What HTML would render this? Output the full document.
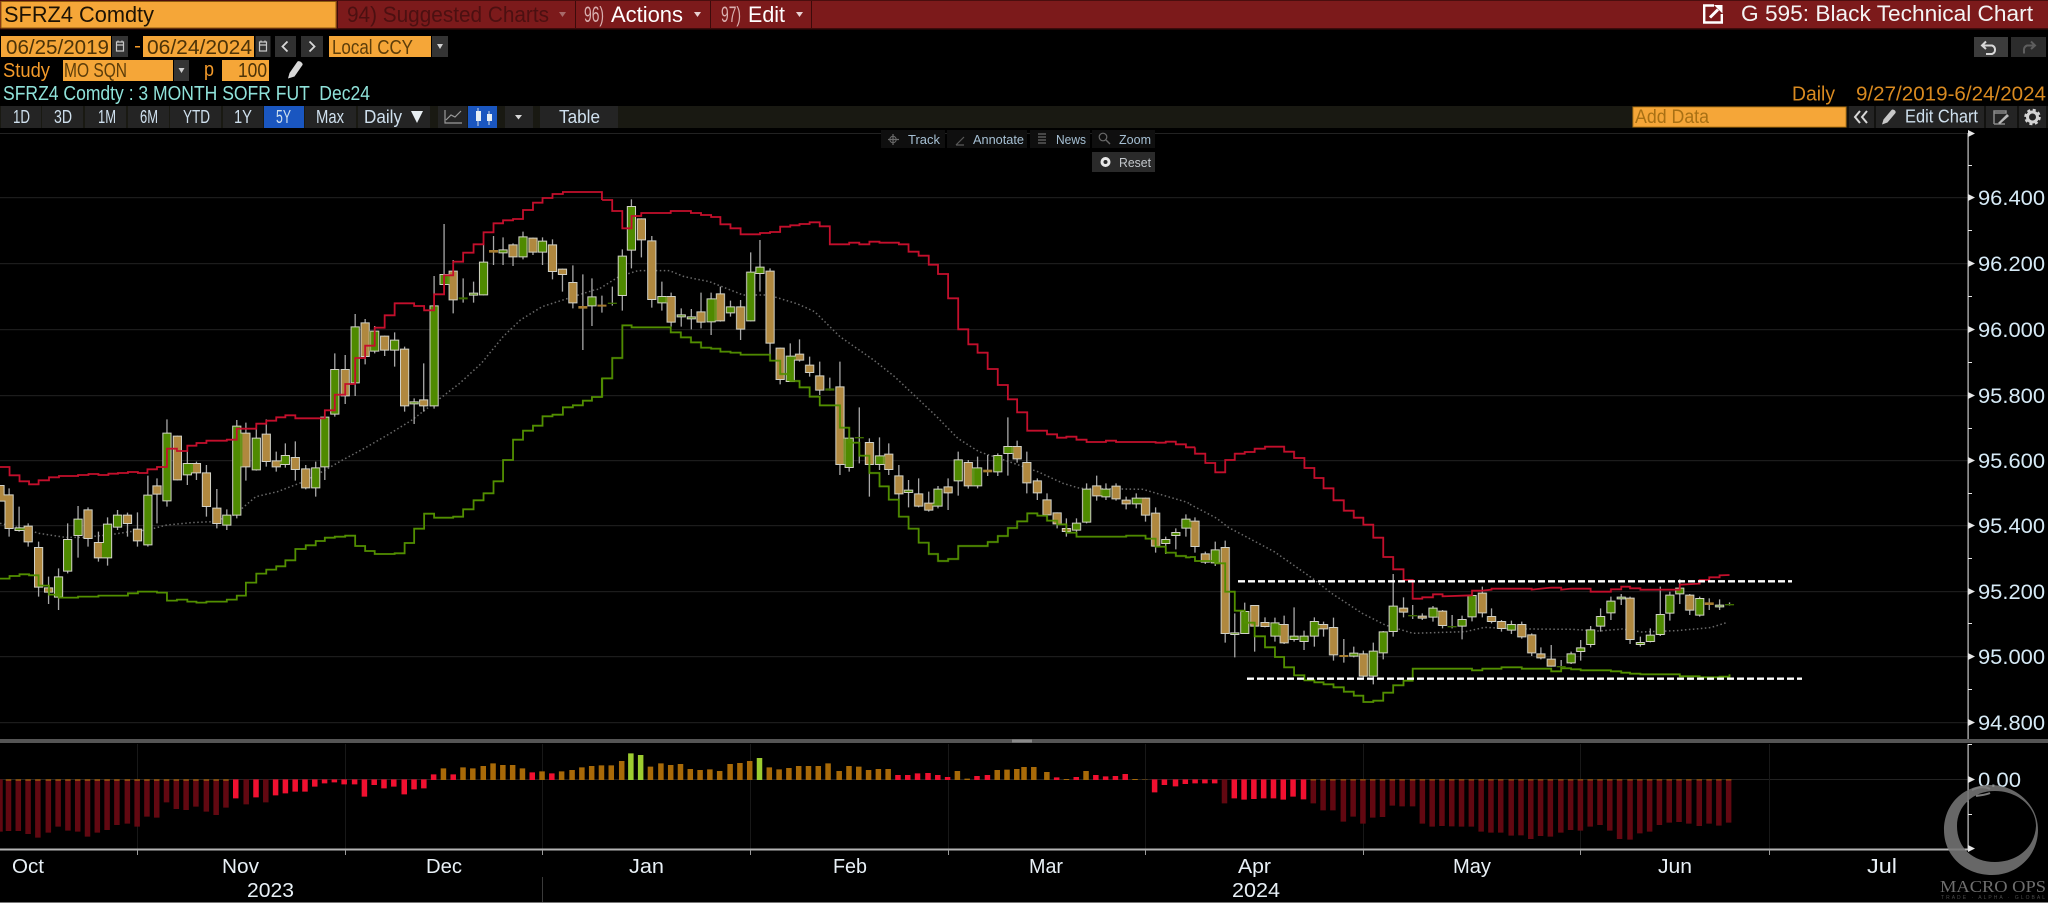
<!DOCTYPE html>
<html><head><meta charset="utf-8"><title>G 595: Black Technical Chart</title>
<style>
html,body{margin:0;padding:0;background:#000;width:2048px;height:903px;overflow:hidden}
svg{display:block;font-family:"Liberation Sans",sans-serif}
path,polyline,line{vector-effect:non-scaling-stroke}
.w{stroke:#a8a8a8;stroke-width:1.3;fill:none}
.b{stroke:#b0883f;stroke-width:9.2;fill:none}
.g{stroke:#4f8a00;stroke-width:9.2;fill:none}
.db{stroke:#a67c30;stroke-width:9;fill:none}
.dg{stroke:#3d6c00;stroke-width:9;fill:none}
.r{fill:none;stroke:#c40f2c;stroke-width:1.8;stroke-linejoin:miter}
.l{fill:none;stroke:#528f00;stroke-width:1.8;stroke-linejoin:miter}
.m{fill:none;stroke:#6a6a6a;stroke-width:1.5;stroke-dasharray:1.5 2.5}
.hd{stroke:#620811;stroke-width:5.5;fill:none}
.hr{stroke:#f01030;stroke-width:5.5;fill:none}
.ho{stroke:#a86a08;stroke-width:5.5;fill:none}
.hl{stroke:#9ccc30;stroke-width:5.5;fill:none}
.t{font-size:20px}
.tp{font-size:22px}
.tb{font-size:18px;fill:#cfe0ee}
.ax{font-size:21px;fill:#d6eaf6}
.dt{font-size:20px;fill:#e8f0f6}
.ov{font-size:13px;fill:#a6c0d4}
</style></head><body>
<svg xmlns="http://www.w3.org/2000/svg" width="2048" height="903" viewBox="0 0 2048 903">
<defs>
<filter id="o" filterUnits="userSpaceOnUse" x="0" y="130" width="2048" height="620" color-interpolation-filters="sRGB">
<feFlood flood-color="#d2d2c8" result="f"/>
<feComposite in="f" in2="SourceAlpha" operator="in" result="edge"/>
<feMorphology in="SourceGraphic" operator="erode" radius="1" result="inner"/>
<feMerge><feMergeNode in="edge"/><feMergeNode in="inner"/></feMerge>
</filter>
</defs>
<rect width="2048" height="903" fill="#000"/>

<!-- top bar -->
<rect x="0" y="0" width="2048" height="29" fill="#7c1a1b"/>
<rect x="0" y="0" width="2048" height="1" fill="#4a0e0e"/>
<rect x="0" y="28" width="2048" height="1.5" fill="#3c0b0b"/>
<rect x="1" y="1.5" width="335" height="26.5" fill="#f5a638" stroke="#8a5a10" stroke-width="1"/>
<g fill="#3c0b0b"><rect x="337" y="1" width="1" height="28"/><rect x="575" y="1" width="1" height="28"/><rect x="710" y="1" width="1" height="28"/><rect x="811" y="1" width="1" height="28"/></g>
<text x="4" y="22" class="tp" fill="#1c1204" textLength="150" lengthAdjust="spacingAndGlyphs">SFRZ4 Comdty</text>
<text x="347" y="22" class="tp" fill="#4c1011" textLength="202" lengthAdjust="spacingAndGlyphs">94) Suggested Charts</text>
<path d="M559 12h7l-3.500 5z" fill="#a86a6a"/>
<text x="584" y="22" class="tp" fill="#d9b0b0" textLength="20" lengthAdjust="spacingAndGlyphs">96)</text>
<text x="611" y="22" class="tp" fill="#fff" textLength="72" lengthAdjust="spacingAndGlyphs">Actions</text>
<path d="M694 12h7l-3.500 5z" fill="#e8d0d0"/>
<text x="721" y="22" class="tp" fill="#d9b0b0" textLength="20" lengthAdjust="spacingAndGlyphs">97)</text>
<text x="748" y="22" class="tp" fill="#fff" textLength="37" lengthAdjust="spacingAndGlyphs">Edit</text>
<path d="M796 12h7l-3.500 5z" fill="#e8d0d0"/>
<path d="M1714 5.500H1704.200V22.500H1721.800V14" fill="none" stroke="#fff" stroke-width="2.400"/>
<path d="M1710 17.500L1718 9.500" fill="none" stroke="#fff" stroke-width="3"/><path d="M1714 5h8.500v8.500z" fill="#fff"/>
<text x="1741" y="21" class="tp" fill="#f4f4f4" textLength="292" lengthAdjust="spacingAndGlyphs">G 595: Black Technical Chart</text>

<!-- row 2 -->
<rect x="1" y="36" width="110" height="21" fill="#f5a638"/>
<text x="6" y="54" class="t" fill="#4c3308" textLength="103" lengthAdjust="spacingAndGlyphs">06/25/2019</text>
<rect x="112" y="36" width="16" height="21" fill="#343434"/>
<path d="M116.500 42h7v9h-7zM116.500 45h7M118 40.500v2M122 40.500v2" fill="none" stroke="#c8c8c8" stroke-width="1.200"/>
<rect x="135" y="46" width="5" height="1.500" fill="#f39a2a"/>
<rect x="143" y="36" width="111" height="21" fill="#f5a638"/>
<text x="147" y="54" class="t" fill="#4c3308" textLength="105" lengthAdjust="spacingAndGlyphs">06/24/2024</text>
<rect x="255.500" y="36" width="15" height="21" fill="#343434"/>
<path d="M259.500 42h7v9h-7zM259.500 45h7M261 40.500v2M265 40.500v2" fill="none" stroke="#c8c8c8" stroke-width="1.200"/>
<rect x="275" y="36" width="21" height="21" fill="#303030"/><rect x="301" y="36" width="22" height="21" fill="#303030"/>
<path d="M287.500 41.500L282.500 46.500L287.500 51.500M309.500 41.500L314.500 46.500L309.500 51.500" fill="none" stroke="#d8d8d8" stroke-width="1.800"/>
<rect x="329" y="36" width="102" height="21" fill="#f5a638"/>
<text x="332" y="54" class="t" fill="#5c3d0a" textLength="81" lengthAdjust="spacingAndGlyphs">Local CCY</text>
<rect x="432" y="36" width="16" height="21" fill="#343434"/><path d="M437 44h6l-3 5z" fill="#d0d0d0"/>
<rect x="1974" y="37" width="34" height="20" fill="#3c3c3c"/><rect x="2011" y="37" width="35" height="20" fill="#2c2c2c"/>
<path d="M1986 41.500L1982 45.500L1986 49M1982.500 45.500H1992a4.500 4.500 0 0 1 0 8.500H1986" fill="none" stroke="#d8d8d8" stroke-width="2"/>
<path d="M2031 41.500L2035 45.500L2031 49M2034.500 45.500H2027a4.500 4.500 0 0 0 -3 5v3" fill="none" stroke="#5e5e5e" stroke-width="2"/>

<!-- row 3 -->
<text x="3" y="77" class="t" fill="#f39a2a" textLength="47" lengthAdjust="spacingAndGlyphs">Study</text>
<rect x="63" y="60" width="110" height="21" fill="#f5a638"/>
<text x="64" y="77" class="t" fill="#5c3d0a" textLength="63" lengthAdjust="spacingAndGlyphs">MO SQN</text>
<rect x="174" y="60" width="15" height="21" fill="#343434"/><path d="M178.500 68h6l-3 5z" fill="#d0d0d0"/>
<text x="204" y="76" class="t" fill="#f39a2a" textLength="10" lengthAdjust="spacingAndGlyphs">p</text>
<rect x="222" y="60" width="47" height="21" fill="#f5a638"/>
<text x="238" y="77" class="t" fill="#4c3308" textLength="29" lengthAdjust="spacingAndGlyphs">100</text>
<path d="M288 78.500l1.500-5.500 8-11.500c1.500-1.500 6 1.500 5 3.500l-8 11.500z" fill="#d8d8d8"/>

<!-- row 4 -->
<text x="3" y="100" class="t" fill="#8fe2da" textLength="367" lengthAdjust="spacingAndGlyphs" xml:space="preserve">SFRZ4 Comdty : 3 MONTH SOFR FUT  Dec24</text>
<text x="1792" y="100.500" class="t" fill="#d98a20" textLength="43" lengthAdjust="spacingAndGlyphs">Daily</text>
<text x="1856" y="100.500" class="t" fill="#d98a20" textLength="190" lengthAdjust="spacingAndGlyphs">9/27/2019-6/24/2024</text>

<!-- toolbar -->
<rect x="0" y="106" width="1633" height="22" fill="#191912"/>
<rect x="1846" y="106" width="202" height="22" fill="#121210"/>
<g fill="#242424">
<rect x="1" y="106" width="40" height="22"/><rect x="42" y="106" width="41" height="22"/><rect x="85" y="106" width="41" height="22"/><rect x="128" y="106" width="41" height="22"/><rect x="170" y="106" width="51" height="22"/><rect x="223" y="106" width="40" height="22"/><rect x="305" y="106" width="51" height="22"/><rect x="358" y="106" width="72" height="22"/><rect x="438" y="106" width="29" height="22"/><rect x="505" y="106" width="28" height="22"/><rect x="540" y="106" width="78" height="22"/>
<rect x="1849" y="106" width="25" height="22"/><rect x="1876" y="106" width="108" height="22"/><rect x="1986" y="106" width="31" height="22"/><rect x="2019" y="106" width="27" height="22"/>
</g>
<rect x="264" y="106" width="40" height="22" fill="#1a56c0"/>
<rect x="468" y="106" width="29" height="22" fill="#1a56c0"/>
<g class="tb">
<text x="13" y="123" textLength="17" lengthAdjust="spacingAndGlyphs">1D</text>
<text x="54" y="123" textLength="18" lengthAdjust="spacingAndGlyphs">3D</text>
<text x="98" y="123" textLength="18" lengthAdjust="spacingAndGlyphs">1M</text>
<text x="140" y="123" textLength="18" lengthAdjust="spacingAndGlyphs">6M</text>
<text x="183" y="123" textLength="27" lengthAdjust="spacingAndGlyphs">YTD</text>
<text x="234" y="123" textLength="18" lengthAdjust="spacingAndGlyphs">1Y</text>
<text x="276" y="123" textLength="15" lengthAdjust="spacingAndGlyphs">5Y</text>
<text x="316" y="123" textLength="28" lengthAdjust="spacingAndGlyphs">Max</text>
<text x="364" y="123" textLength="38" lengthAdjust="spacingAndGlyphs">Daily</text>
<text x="559" y="123" textLength="41" lengthAdjust="spacingAndGlyphs">Table</text>
<text x="1905" y="122.500" textLength="73" lengthAdjust="spacingAndGlyphs">Edit Chart</text>
</g>
<path d="M411 111h12l-6 12z" fill="#e8eef2"/>
<path d="M445 110v13h17M446 120l5-5 4 2 6-6" fill="none" stroke="#9a9a9a" stroke-width="1.200"/>
<path d="M478 108v18M489 111v14" stroke="#d0d8e0" stroke-width="1"/><path d="M476 111h5v10h-5zM487 114h5v7h-5z" fill="#e6eef4"/>
<path d="M515 115h7l-3.500 4.500z" fill="#d8d8d8"/>
<rect x="1633" y="107" width="213" height="20" fill="#f5a638" stroke="#b87a18" stroke-width="1"/>
<text x="1635" y="123" font-size="19" fill="#a87014" textLength="74" lengthAdjust="spacingAndGlyphs">Add Data</text>
<path d="M1860 111l-5 6 5 6M1867 111l-5 6 5 6" fill="none" stroke="#d8d8d8" stroke-width="2"/>
<path d="M1882 124.500l1.500-5 8-9.500c1.500-1.500 5 1 4 3l-8 9.500z" fill="#c8c8c8"/>
<path d="M1994 111h12v2h-12zM1994 113v11M1994 124h11" fill="none" stroke="#8a8a8a" stroke-width="1.500"/><path d="M1998 123l9-9 2 2-9 8z" fill="#b8b8b8"/>
<circle cx="2032.500" cy="117" r="5" fill="none" stroke="#d4d4d4" stroke-width="3"/><circle cx="2032.500" cy="117" r="7" fill="none" stroke="#d4d4d4" stroke-width="2.500" stroke-dasharray="3 2.500"/>

<!-- chart frame -->
<rect x="0" y="133" width="1968" height="1" fill="#222"/>
<g fill="#1c1c1c">
<rect x="0" y="197" width="1968" height="1.200"/><rect x="0" y="263" width="1968" height="1.200"/><rect x="0" y="329" width="1968" height="1.200"/><rect x="0" y="395" width="1968" height="1.200"/><rect x="0" y="460" width="1968" height="1.200"/><rect x="0" y="525" width="1968" height="1.200"/><rect x="0" y="591" width="1968" height="1.200"/><rect x="0" y="656" width="1968" height="1.200"/><rect x="0" y="722" width="1968" height="1.200"/>
</g>

<!-- moving average -->
<g transform="translate(0,140) scale(.43367,.33333)"><polyline class="m" points="0,1150 50,1165 90,1180 150,1192 190,1192 250,1185 300,1175 340,1170 385,1155 440,1148 490,1145 540,1125 590,1070 640,1055 700,1025 750,990 790,960 840,925 900,880 950,840 1000,790 1060,730 1110,670 1160,590 1200,540 1250,500 1310,475 1370,450 1383,447"/></g>
<g transform="translate(600,180) scale(.42092,.33333)"><polyline class="m" points="0,325 45,290 90,272 165,272 200,290 260,305 300,325 340,345 400,345 470,372 510,395 570,470 650,540 700,590 750,650 800,710 850,775 900,815 960,840 1040,875 1100,910 1140,925 1290,928 1390,965 1400,970"/></g>
<g transform="translate(1190,440) scale(.38265,.33333)"><polyline class="m" points="0,193 70,235 100,262 220,335 320,415 370,460 450,520 510,555 583,580 720,575 770,562 820,565 880,567 1000,568 1070,573 1130,567 1180,576 1270,572 1360,563 1405,547"/></g>

<!-- wicks -->
<g transform="translate(0,140) scale(.43367,.33333)"><path class="w" d="M21 1045V1190M44 1100V1175M65 1150V1220M89 1205V1370M112 1310V1392M135 1285V1410M156 1150V1300M180 1098V1253M203 1102V1220M227 1175V1265M248 1132V1277M271 1110V1170M294 1118V1190M317 1117V1220M341 1007V1220M362 1015V1150M385 838V1100M409 887V1021M432 930V1035M453 965V1020M476 975V1130M500 1047V1165M523 1108V1170M546 840V1135M567 848V1022M591 865V992M614 838V980M637 935V995M658 910V983M681 904V1022M705 975V1048M728 965V1070M749 830V1020M772 640V830M796 645V792M819 522V768M842 537V673M864 558V640M887 587V648M910 577V680M933 620V815M955 775V852M977 670V815M1001 408V806M1024 252V435M1045 360V520M1068 415V488M1092 425V488M1115 312V466M1138 288V375M1160 292V375M1183 310V378M1206 275V358M1229 293V345M1251 292V375M1274 298V418M1297 386V455M1321 376V505M1344 403V630M1365 415V558M1388 467V518M1412 440V497M1435 328V512M1456 178V385M1479 235V352M1503 288V503"/></g>
<g transform="translate(600,180) scale(.42092,.33333)"><path class="w" d="M147 305V392M169 338V440M193 385V440M217 387V448M240 338V445M264 338V465M286 320V425M310 362V410M334 360V480M358 217V424M380 180V335M404 265V525M428 503V613M452 490V606M474 478V545M498 530V590M522 545V645M546 593V632M570 545V885M592 773V875M616 682V850M640 775V950M664 772V870M686 790V885M710 855V960M733 900V982M757 895V982M781 935V995M803 918V985M827 895V990M851 815V947M875 840V926M897 830V925M921 825V888M945 820V888M969 712V887M991 782V848M1014 815V940M1039 895V960M1062 940V1012M1086 997V1045M1108 1015V1070M1132 1015V1060M1156 910V1030M1180 887V962M1202 910V960M1226 910V962M1250 950V988M1274 940V985M1296 953V1025M1320 982V1118M1344 1070V1122M1368 1045V1108M1392 1003V1070"/></g>
<g transform="translate(1190,440) scale(.38265,.33333)"><path class="w" d="M13 232V338M40 335V372M66 305V378M92 302V608M117 520V652M143 488V582M169 495V635M196 532V562M222 533V605M246 527V612M272 502V605M298 572V630M325 532V620M349 545V590M375 533V662M402 597V668M428 620V652M453 632V712M479 608V733M505 573V658M531 402V590M558 472V532M582 495V537M607 520V540M635 498V545M660 510V565M685 525V565M711 527V598M737 465V544M764 440V532M788 505V550M814 540V575M840 542V582M867 545V596M893 580V648M917 622V658M944 615V680M970 660V695M996 635V672M1021 600V662M1047 558V622M1073 505V575M1100 470V540M1127 462V495M1150 470V612M1177 590V620M1203 565V607M1229 440V588M1254 455V542M1280 418V492M1306 462V525M1332 470V530M1357 475V510M1384 478V510M1410 487V497"/></g>

<!-- dojis -->
<g transform="translate(0,140) scale(.43367,.33333)"><path class="db" d="M1138 330V338M1344 498V506M1388 494V500"/><path class="dg" d="M1068 472V478M1412 488V492"/></g>
<g transform="translate(600,180) scale(.42092,.33333)"><path class="dg" d="M546 625V632M616 771V775"/><path class="db" d="M921 869V877"/></g>
<g transform="translate(1190,440) scale(.38265,.33333)"><path class="db" d="M402 645V651M1357 487V495"/><path class="dg" d="M582 525V529M685 558V562M970 678V682M1410 492V496"/></g>

<!-- candle bodies -->
<g filter="url(#o)">
<g transform="translate(0,140) scale(.43367,.33333)">
<path class="b" d="M0 1035V1085M21 1063V1167M65 1157V1207M89 1221V1343M112 1342V1358M203 1108V1197M227 1206V1255M294 1124V1152M317 1166V1204M362 1036V1064M409 887V1021M453 969V1000M476 997V1101M500 1103V1152M567 878V982M614 881V966M637 961V982M681 951V990M705 985V1045M796 687V769M842 547V651M887 587V632M933 626V799M977 778V799M1045 392V481M1183 313V352M1229 293V338M1274 313V396M1297 386V405M1321 426V490M1479 235V301M1503 301V480"/>
<path class="g" d="M44 1162V1173M135 1309V1373M156 1197V1295M180 1136V1188M248 1151V1255M271 1124V1163M341 1064V1216M385 878V1084M432 969V1006M523 1124V1157M546 857V1127M591 893V991M658 945V975M728 982V1045M749 830V982M772 687V824M819 559V730M864 572V635M910 599V632M955 784V793M1001 496V799M1024 402V435M1092 458V467M1115 365V466M1160 328V340M1206 289V352M1251 302V338M1365 469V499M1435 347V468M1456 198V332"/>
</g>
<g transform="translate(600,180) scale(.42092,.33333)">
<path class="b" d="M169 348V428M240 394V428M286 340V424M334 379V449M404 272V491M428 503V600M474 521V542M498 554V579M522 586V632M570 619V855M640 786V855M686 821V870M710 886V943M757 940V980M781 968V992M827 919V940M875 846V919M991 798V838M1014 846V910M1039 901V940M1062 958V1006M1086 997V1033M1108 1044V1056M1180 916V949M1226 917V958M1250 959V973M1296 953V1007M1320 998V1100"/>
<path class="g" d="M147 348V370M193 403V412M217 409V418M264 355V427M310 379V400M358 275V424M380 260V282M452 527V606M592 773V864M664 826V855M733 929V939M803 926V980M851 838V904M897 862V919M945 825V877M969 798V822M1132 1028V1052M1156 926V1028M1202 926V952M1274 953V973M1344 1077V1092M1368 1056V1068M1392 1016V1046"/>
</g>
<g transform="translate(1190,440) scale(.38265,.33333)">
<path class="b" d="M13 242V321M40 340V368M92 321V582M169 495V560M196 546V561M246 552V610M349 552V568M375 561V646M453 640V710M558 503V518M607 527V536M660 512V558M764 458V520M788 528V546M814 543V567M867 552V592M893 583V640M917 640V655M944 656V680M1150 473V600M1306 464V512"/>
<path class="g" d="M66 328V370M117 577V585M143 513V582M222 547V590M272 587V600M298 587V606M325 543V590M428 638V650M479 632V710M505 574V640M531 497V576M635 503V533M711 537V560M737 465V532M840 552V572M996 640V670M1021 622V636M1047 568V615M1073 528V560M1100 482V520M1127 470V478M1177 606V615M1203 584V606M1229 522V585M1254 464V521M1280 443V463M1332 474V527M1384 494V502"/>
</g>
</g>

<!-- red line -->
<g transform="translate(0,140) scale(.43367,.33333)"><polyline class="r" points="0,981 22,981 22,1006 45,1006 45,1024 67,1024 67,1033 89,1033 89,1021 113,1021 113,1012 136,1012 136,1008 180,1008 180,1005 204,1005 204,1002 227,1002 227,1005 250,1005 250,1001 272,1001 272,999 295,999 295,996 318,996 318,999 340,999 340,988 362,988 362,981 385,981 385,926 408,926 408,933 432,933 432,917 453,917 453,909 476,909 476,902 523,902 523,899 546,899 546,866 591,866 591,851 614,851 614,842 637,842 637,832 658,832 658,826 681,826 681,835 749,835 749,811 772,811 772,764 796,764 796,732 819,732 819,654 842,654 842,617 864,617 864,563 887,563 887,526 910,526 910,490 955,490 955,498 978,498 978,511 1001,511 1001,463 1024,463 1024,406 1045,406 1045,365 1068,365 1068,338 1092,338 1092,313 1115,313 1115,277 1138,277 1138,250 1160,250 1160,241 1183,241 1183,237 1206,237 1206,210 1229,210 1229,188 1251,188 1251,174 1274,174 1274,162 1298,162 1298,156 1388,156 1388,180"/></g>
<g transform="translate(600,180) scale(.42092,.33333)"><polyline class="r" points="5,60 29,60 29,93 53,93 53,145 75,145 75,108 98,108 98,99 168,99 168,93 216,93 216,99 240,99 240,105 264,105 264,111 286,111 286,133 310,133 310,145 334,145 334,163 380,163 380,159 404,159 404,156 428,156 428,140 452,140 452,136 474,136 474,132 498,132 498,127 522,127 522,139 546,139 546,193 592,193 592,188 616,188 616,193 640,193 640,185 664,185 664,188 710,188 710,193 733,193 733,215 757,215 757,227 781,227 781,254 803,254 803,282 827,282 827,355 851,355 851,448 875,448 875,493 897,493 897,518 921,518 921,567 945,567 945,615 969,615 969,658 991,658 991,697 1015,697 1015,752 1062,752 1062,763 1086,763 1086,773 1108,773 1108,770 1132,770 1132,779 1156,779 1156,786 1202,786 1202,782 1226,782 1226,786 1320,786 1320,788 1344,788 1344,785 1368,785 1368,793 1392,793 1392,802 1414,802"/></g>
<g transform="translate(1190,440) scale(.38265,.33333)"><polyline class="r" points="13,22 13,41 40,41 40,69 66,69 66,97 92,97 92,60 117,60 117,41 143,41 143,36 169,36 169,26 196,26 196,20 246,20 246,35 272,35 272,54 299,54 299,84 325,84 325,114 349,114 349,145 375,145 375,181 402,181 402,212 428,212 428,233 453,233 453,254 479,254 479,293 505,293 505,351 531,351 531,388 558,388 558,420 582,420 582,476 607,476 607,472 635,472 635,463 660,463 660,469 737,466 737,452 764,452 788,449 788,446 893,446 893,449 917,446 944,443 970,443 970,449 996,446 1047,446 1047,455 1100,455 1100,448 1127,448 1127,440 1150,440 1150,445 1177,445 1177,449 1280,449 1280,434 1332,431 1332,420 1357,420 1357,412 1384,412 1384,406 1410,405"/></g>

<!-- green line -->
<g transform="translate(0,140) scale(.43367,.33333)"><polyline class="l" points="0,1316 22,1316 22,1308 45,1308 45,1303 67,1303 67,1306 89,1306 89,1337 113,1337 113,1364 136,1364 136,1373 180,1373 180,1370 227,1370 227,1367 295,1367 295,1360 318,1360 318,1355 362,1355 362,1358 385,1358 385,1382 408,1382 408,1379 432,1379 432,1385 453,1385 453,1388 476,1388 476,1385 523,1385 523,1379 546,1379 546,1367 567,1367 567,1328 591,1328 591,1301 614,1301 614,1289 637,1289 637,1279 658,1279 658,1261 681,1261 681,1227 705,1227 705,1216 728,1216 728,1203 749,1203 749,1193 772,1193 772,1190 796,1190 796,1187 819,1187 819,1218 842,1218 842,1233 864,1233 864,1242 910,1242 910,1240 933,1240 933,1209 955,1209 955,1166 978,1166 978,1121 1001,1121 1001,1133 1045,1133 1045,1130 1068,1130 1068,1108 1092,1108 1092,1081 1115,1081 1115,1060 1138,1060 1138,1024 1160,1024 1160,960 1183,960 1183,899 1206,899 1206,872 1229,872 1229,857 1251,857 1251,829 1274,829 1274,824 1298,824 1298,802 1321,802 1321,796 1344,796 1344,782 1365,782 1365,771 1388,771 1388,714"/></g>
<g transform="translate(600,180) scale(.42092,.33333)"><polyline class="l" points="5,652 5,595 29,595 29,534 53,534 53,436 75,436 75,442 168,442 168,457 192,457 192,472 216,472 216,487 240,487 240,503 264,503 264,506 286,506 286,515 310,515 310,518 334,518 334,524 404,524 404,542 428,542 428,582 452,582 452,603 474,603 474,622 498,622 498,650 522,650 522,676 570,676 570,743 592,743 592,788 616,788 616,827 640,827 640,879 664,879 664,919 686,919 686,959 710,959 710,1010 733,1010 733,1046 757,1046 757,1088 781,1088 781,1122 803,1122 803,1143 827,1143 827,1137 851,1137 851,1098 921,1098 921,1086 945,1086 945,1068 969,1068 969,1044 991,1044 991,1024 1015,1024 1015,1000 1039,1000 1039,1007 1062,1007 1062,1022 1086,1022 1086,1033 1108,1033 1108,1058 1132,1058 1132,1070 1250,1070 1250,1067 1296,1067 1296,1076 1320,1076 1320,1100 1344,1100 1344,1118 1368,1118 1368,1128 1392,1128 1392,1132 1403,1132"/></g>
<g transform="translate(1190,440) scale(.38265,.33333)"><polyline class="l" points="0,351 13,351 13,363 66,363 66,370 92,370 92,455 117,455 117,512 143,512 143,548 169,548 169,589 196,589 196,622 222,622 222,651 246,651 246,682 272,682 272,706 299,706 299,721 325,721 325,727 349,727 349,733 375,733 375,742 402,742 402,755 428,755 428,767 453,767 453,786 479,786 479,782 505,782 505,758 531,758 531,736 558,736 558,722 582,722 582,686 737,686 737,691 764,691 764,686 814,686 814,682 867,682 867,686 944,686 944,694 970,694 970,685 996,685 996,688 1021,688 1021,691 1100,691 1100,694 1127,694 1127,698 1150,698 1150,701 1177,701 1177,703 1280,703 1280,709 1332,709 1332,712 1384,712 1384,710 1410,710 1410,703"/></g>

<!-- dashed support/resistance -->
<line x1="1238" y1="581.300" x2="1792" y2="581.300" stroke="#fff" stroke-width="2.400" stroke-dasharray="7 3"/>
<line x1="1247" y1="678.700" x2="1802" y2="678.700" stroke="#fff" stroke-width="2.400" stroke-dasharray="7 3"/>

<!-- separator and lower panel -->
<rect x="0" y="739" width="2048" height="4" fill="#555"/>
<rect x="1012" y="739.500" width="20" height="3" fill="#8a8a8a"/>
<rect x="0" y="779" width="1968" height="1" fill="#222"/>
<g fill="#181818"><rect x="137" y="744" width="1" height="105"/><rect x="345" y="744" width="1" height="105"/><rect x="542" y="744" width="1" height="105"/><rect x="750" y="744" width="1" height="105"/><rect x="948" y="744" width="1" height="105"/><rect x="1145" y="744" width="1" height="105"/><rect x="1363" y="744" width="1" height="105"/><rect x="1580" y="744" width="1" height="105"/><rect x="1769" y="744" width="1" height="105"/></g>

<g transform="translate(0,730) scale(.65306,.33333)">
<path class="hd" d="M0 148V305M13 148V303M28 148V303M43 148V312M58 148V323M74 148V308M89 148V290M104 148V302M119 148V305M134 148V320M149 148V308M164 148V300M179 148V285M195 148V281M210 148V290M225 148V260M240 148V263M255 148V217M270 148V237M285 148V240M300 148V230M316 148V245M331 148V255M346 148V233M377 148V223M407 148V217"/>
<path class="hr" d="M361 148V205M392 148V202M422 148V196M437 148V190M452 148V185M467 148V185M482 148V170M497 148V160M512 148V157M527 148V163M543 148V163M558 148V200M573 148V165M588 148V175M603 148V170M619 148V193M634 148V178M649 148V175M664 150V133M694 150V133M815 150V127M845 150V130M1375 150V135M1390 150V135M1405 150V130M1421 150V129M1436 150V135M1451 150V141M1496 150V138M1512 150V135"/>
<path class="ho" d="M679 150V115M709 150V112M724 150V115M740 150V108M755 150V100M770 150V105M785 150V105M800 150V115M830 150V124M860 150V124M876 150V120M891 150V112M906 150V108M921 150V106M936 150V106M952 150V93M996 150V110M1012 150V100M1027 150V105M1042 150V102M1057 150V117M1072 150V120M1087 150V118M1102 150V123M1118 150V102M1133 150V99M1148 150V93M1178 150V112M1193 150V118M1208 150V114M1223 150V108M1238 150V108M1253 150V108M1268 150V100M1285 150V123M1300 150V108M1315 150V110M1330 150V120M1345 150V117M1360 150V117M1466 150V123M1481 150V146M1527 150V120M1542 150V119M1557 150V117"/>
<path class="hl" d="M966 150V70M981 150V75M1163 150V84"/>
<path class="ho" d="M13 148V152M28 148V152M43 148V152M58 148V152M74 148V152M89 148V152M104 148V152M119 148V152M134 148V152M149 148V152M164 148V152M179 148V152M195 148V152M210 148V152M225 148V152M240 148V152M255 148V152M270 148V152M285 148V152M300 148V152M316 148V152M331 148V152M346 148V152"/>
</g>
<g transform="translate(1024,730) scale(.65306,.33333)">
<path class="ho" d="M0 150V111M15 150V111M35 150V126M65 150V147M95 150V123M170 150V147M185 150V149"/>
<path class="hr" d="M50 150V142M80 150V141M110 150V135M125 150V139M140 150V138M155 150V132M200 148V187M215 148V165M232 148V169M247 148V162M262 148V160M277 148V160M292 148V160M322 148V205M337 148V209M352 148V207M367 148V205M382 148V205M397 148V209M412 148V200M428 148V208"/>
<path class="hd" d="M307 148V220M443 148V220M458 148V241M473 148V241M489 148V275M504 148V260M519 148V281M534 148V263M549 148V261M564 148V227M579 148V229M595 148V229M610 148V281M625 148V290M640 148V288M655 148V289M670 148V290M685 148V290M700 148V305M715 148V308M730 148V308M746 148V317M761 148V316M776 148V327M791 148V318M806 148V320M822 148V308M837 148V300M852 148V302M867 148V290M882 148V285M897 148V302M912 148V327M928 148V329M943 148V310M958 148V305M973 148V285M988 148V278M1003 148V276M1018 148V281M1034 148V288M1049 148V281M1064 148V287M1079 148V278"/>
<path class="ho" d="M443 148V151M458 148V151M473 148V151M489 148V151M504 148V151M519 148V151M534 148V151M549 148V151M564 148V151M579 148V151M595 148V151M610 148V151M625 148V151M640 148V151M655 148V151M670 148V151M685 148V151M700 148V151M715 148V151M730 148V151M746 148V151M761 148V151M776 148V151M791 148V151M806 148V151M822 148V151M837 148V151M852 148V151M867 148V151M882 148V151M897 148V151M912 148V151M928 148V151M943 148V151M958 148V151M973 148V151M988 148V151M1003 148V151M1018 148V151M1034 148V151M1049 148V151M1064 148V151M1079 148V151"/>
</g>

<rect x="0" y="848.500" width="1968" height="2" fill="#b4b4b4"/>
<g fill="#9a9a9a"><rect x="137" y="850" width="1" height="5"/><rect x="345" y="850" width="1" height="5"/><rect x="542" y="850" width="1" height="5"/><rect x="750" y="850" width="1" height="5"/><rect x="948" y="850" width="1" height="5"/><rect x="1145" y="850" width="1" height="5"/><rect x="1363" y="850" width="1" height="5"/><rect x="1580" y="850" width="1" height="5"/><rect x="1769" y="850" width="1" height="5"/></g>
<rect x="542" y="877" width="1" height="26" fill="#3a3a3a"/>
<rect x="0" y="902" width="2048" height="1" fill="#777"/>

<!-- date labels -->
<g class="dt">
<text x="12" y="873" textLength="32" lengthAdjust="spacingAndGlyphs">Oct</text>
<text x="222" y="873" textLength="37" lengthAdjust="spacingAndGlyphs">Nov</text>
<text x="426" y="873" textLength="36" lengthAdjust="spacingAndGlyphs">Dec</text>
<text x="629" y="873" textLength="35" lengthAdjust="spacingAndGlyphs">Jan</text>
<text x="833" y="873" textLength="34" lengthAdjust="spacingAndGlyphs">Feb</text>
<text x="1029" y="873" textLength="34" lengthAdjust="spacingAndGlyphs">Mar</text>
<text x="1238" y="873" textLength="33" lengthAdjust="spacingAndGlyphs">Apr</text>
<text x="1453" y="873" textLength="38" lengthAdjust="spacingAndGlyphs">May</text>
<text x="1658" y="873" textLength="34" lengthAdjust="spacingAndGlyphs">Jun</text>
<text x="1867" y="873" textLength="30" lengthAdjust="spacingAndGlyphs">Jul</text>
<text x="247" y="897" textLength="47" lengthAdjust="spacingAndGlyphs">2023</text>
<text x="1232" y="897" textLength="48" lengthAdjust="spacingAndGlyphs">2024</text>
</g>

<!-- right axis -->
<rect x="1967.500" y="133" width="1.200" height="606" fill="#c8c8c8"/>
<rect x="1967.500" y="744" width="1.200" height="106" fill="#c8c8c8"/>
<g fill="#e6e6e6">
<path d="M1968 130l7 3.500-7 3.500zM1968 194l7 3.500-7 3.500zM1968 260l7 3.500-7 3.500zM1968 326l7 3.500-7 3.500zM1968 392l7 3.500-7 3.500zM1968 457l7 3.500-7 3.500zM1968 522l7 3.500-7 3.500zM1968 588l7 3.500-7 3.500zM1968 653l7 3.500-7 3.500zM1968 719l7 3.500-7 3.500zM1968 776l7 3.500-7 3.500zM1968 845l7 3.500-7 3.500z"/>
<rect x="1968" y="165" width="4" height="1"/><rect x="1968" y="230" width="4" height="1"/><rect x="1968" y="296" width="4" height="1"/><rect x="1968" y="362" width="4" height="1"/><rect x="1968" y="428" width="4" height="1"/><rect x="1968" y="493" width="4" height="1"/><rect x="1968" y="558" width="4" height="1"/><rect x="1968" y="623" width="4" height="1"/><rect x="1968" y="689" width="4" height="1"/><rect x="1968" y="814" width="4" height="1"/><rect x="1968" y="744" width="4" height="1"/>
</g>
<g class="ax">
<text x="1978" y="205" textLength="67" lengthAdjust="spacingAndGlyphs">96.400</text>
<text x="1978" y="271" textLength="67" lengthAdjust="spacingAndGlyphs">96.200</text>
<text x="1978" y="337" textLength="67" lengthAdjust="spacingAndGlyphs">96.000</text>
<text x="1978" y="403" textLength="67" lengthAdjust="spacingAndGlyphs">95.800</text>
<text x="1978" y="468" textLength="67" lengthAdjust="spacingAndGlyphs">95.600</text>
<text x="1978" y="533" textLength="67" lengthAdjust="spacingAndGlyphs">95.400</text>
<text x="1978" y="599" textLength="67" lengthAdjust="spacingAndGlyphs">95.200</text>
<text x="1978" y="664" textLength="67" lengthAdjust="spacingAndGlyphs">95.000</text>
<text x="1978" y="730" textLength="67" lengthAdjust="spacingAndGlyphs">94.800</text>
<text x="1978" y="787" textLength="43" lengthAdjust="spacingAndGlyphs">0.00</text>
</g>

<!-- overlay buttons -->
<g fill="#0f0f0f"><rect x="881" y="130" width="64" height="18"/><rect x="947" y="130" width="80" height="18"/><rect x="1030" y="130" width="60" height="18"/><rect x="1092" y="130" width="63" height="18"/></g>
<rect x="1092" y="152" width="63" height="20" fill="#2a2a2a"/>
<path d="M893 134v11M888 139.500h11" stroke="#6a6a6a" stroke-width="1.200"/><circle cx="893" cy="139.500" r="3.200" fill="none" stroke="#6a6a6a"/>
<path d="M956 145h8M956 145l8-8" stroke="#5a5a5a" stroke-width="1.200" fill="none"/>
<path d="M1038 134h8M1038 137h8M1038 140h8M1038 143h8" stroke="#5a5a5a" stroke-width="1.500"/>
<circle cx="1103" cy="137" r="3.800" fill="none" stroke="#6a6a6a" stroke-width="1.200"/><path d="M1106 140l4 4" stroke="#6a6a6a" stroke-width="1.400"/>
<circle cx="1105.500" cy="162" r="3.500" fill="none" stroke="#e8e8e8" stroke-width="3"/>
<text x="908" y="144" class="ov" textLength="32" lengthAdjust="spacingAndGlyphs">Track</text>
<text x="973" y="144" class="ov" textLength="51" lengthAdjust="spacingAndGlyphs">Annotate</text>
<text x="1056" y="144" class="ov" textLength="30" lengthAdjust="spacingAndGlyphs">News</text>
<text x="1119" y="144" class="ov" textLength="32" lengthAdjust="spacingAndGlyphs">Zoom</text>
<text x="1119" y="167" class="ov" textLength="32" lengthAdjust="spacingAndGlyphs" style="fill:#c4c8cc">Reset</text>

<!-- logo -->
<path fill-rule="evenodd" fill="#757575" opacity=".88" d="M1944 830c0-26 20-46 48-45c25 1 46 20 46 45c0 25-20 45-46 45c-27 0-48-19-48-45zM1957 826c0 22 16 36 38 36c23 0 40-15 41-36c0-19-18-35-41-35c-22 0-38 15-38 35z"/>
<path d="M1972 790c6-3 12-4 18-1M1976 796c5-1 10-1 14-3" fill="none" stroke="#7c7c7c" stroke-width="2"/>
<text x="1940" y="892" font-size="17" fill="#6e6e6e" textLength="106" lengthAdjust="spacingAndGlyphs" style="font-family:'Liberation Serif',serif">MACRO OPS</text>
<text x="1941" y="899" font-size="5" fill="#4a4a4a" textLength="104" lengthAdjust="spacing">TRADE · ALPHA · GLOBAL</text>
</svg>
</body></html>
